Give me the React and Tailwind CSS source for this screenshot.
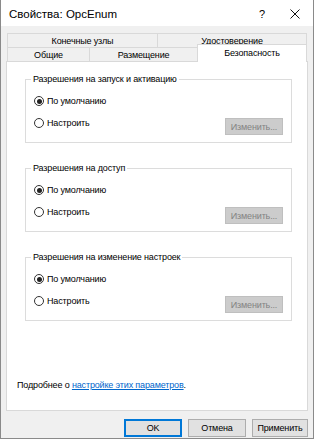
import React from "react";

const F = { fontFamily: '"Liberation Sans", Arial, sans-serif' };

function Radio({ checked, label }) {
  return (
    <div className="flex items-center h-[12px]">
      <span className="w-[10px] h-[10px] rounded-full border border-[#333] bg-white flex items-center justify-center">
        {checked && <span className="w-[5px] h-[5px] rounded-full bg-[#222]" />}
      </span>
      <span className="ml-[3px] leading-[12px]">{label}</span>
    </div>
  );
}

function Group({ title, mt }) {
  return (
    <div className={`relative ml-[18px] w-[267px] h-[64px] border border-[#dcdcdc] ${mt}`}>
      <span className="absolute -top-[7px] left-[5px] bg-white px-[2px] leading-[12px]">{title}</span>
      <div className="pl-[8px] pr-[8px] pt-[15px]">
        <Radio checked label="По умолчанию" />
        <div className="flex items-start justify-between mt-[10px]">
          <Radio label="Настроить" />
          <div className="mt-[1px] w-[58px] h-[17px] bg-[#cccccc] border border-[#bfbfbf] text-[#838383] flex items-center justify-center leading-[12px]">
            Изменить...
          </div>
        </div>
      </div>
    </div>
  );
}

function Tab({ w, children, last }) {
  return (
    <div
      className={`${w} h-[14px] border-t border-l ${last ? "border-r" : ""} border-[#d9d9d9] bg-[#f0f0f0] flex items-center justify-center leading-[12px]`}
    >
      {children}
    </div>
  );
}

export default function App() {
  return (
    <div className="w-[316px] h-[442px] bg-white text-[9px] tracking-[-0.15px] text-black" style={F}>
      <div className="w-[314px] h-[439px] border-x border-b border-[#8a8a8a] bg-[#f0f0f0] flex flex-col">
        <div className="h-[26px] bg-white flex items-center pl-[8px] pt-[2px] relative">
          <span className="text-[11.5px] tracking-normal leading-[12px]">Свойства: OpcEnum</span>
          <span className="ml-auto mr-[25px] text-[11px] leading-[12px]">?</span>
          <svg width="10" height="10" viewBox="0 0 10 10" className="mr-[13px]">
            <path d="M0.5 0.5 L9.5 9.5 M9.5 0.5 L0.5 9.5" stroke="#111" strokeWidth="1" />
          </svg>
        </div>
        <div className="mt-[7px] ml-[6px] w-[300px]">
          <div className="flex h-[14px]">
            <Tab w="w-[150px]">Конечные узлы</Tab>
            <Tab w="w-[150px]" last>Удостоверение</Tab>
          </div>
          <div className="flex h-[14px] items-start">
            <Tab w="w-[82px]">Общие</Tab>
            <Tab w="w-[108px]">Размещение</Tab>
            <div className="relative z-10 -mt-[3px] w-[110px] h-[18px] bg-white border-t border-x border-[#d9d9d9] flex items-start justify-center pt-[2px] leading-[12px]">
              Безопасность
            </div>
          </div>
        </div>
        <div className="ml-[5px] w-[302px] h-[350px] bg-white border border-[#d9d9d9] flex flex-col">
          <Group title="Разрешения на запуск и активацию" mt="mt-[17px]" />
          <Group title="Разрешения на доступ" mt="mt-[25px]" />
          <Group title="Разрешения на изменение настроек" mt="mt-[25px]" />
          <div className="mt-auto mb-[19px] pl-[10px] leading-[12px]">
            Подробнее о{" "}
            <span className="text-[#0066cc] underline">настройке этих параметров</span>.
          </div>
        </div>
        <div className="flex mt-[8px] ml-[123px] gap-[6px]">
          <div className="w-[58px] h-[18px] bg-[#e1e1e1] border border-[#0078d7] shadow-[inset_0_0_0_1px_#0078d7] flex items-center justify-center leading-[12px]">
            OK
          </div>
          <div className="w-[58px] h-[18px] bg-[#e1e1e1] border border-[#adadad] flex items-center justify-center leading-[12px]">
            Отмена
          </div>
          <div className="w-[56px] h-[18px] bg-[#e1e1e1] border border-[#adadad] flex items-center justify-center leading-[12px]">
            Применить
          </div>
        </div>
      </div>
    </div>
  );
}
